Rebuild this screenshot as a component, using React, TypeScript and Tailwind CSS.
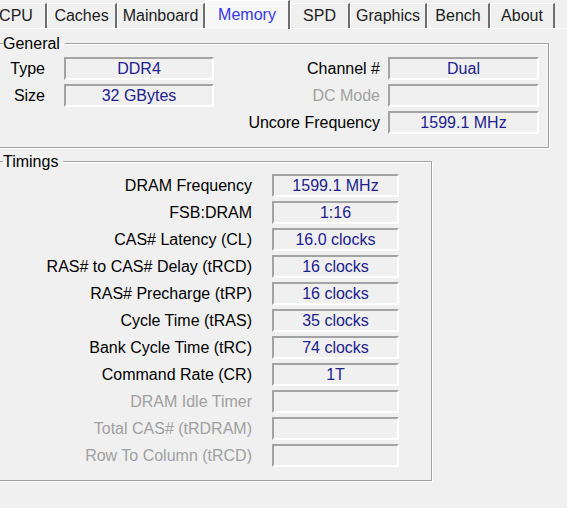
import React from 'react';

const tabs = [
  { name: 'CPU', w: 'w-[61px]' },
  { name: 'Caches', w: 'w-[70px]' },
  { name: 'Mainboard', w: 'w-[88px]' },
  { name: 'Memory', w: 'w-[85px]', active: true },
  { name: 'SPD', w: 'w-[60px]' },
  { name: 'Graphics', w: 'w-[77px]' },
  { name: 'Bench', w: 'w-[63px]' },
  { name: 'About', w: 'w-[65px]' },
];

const timings = [
  { label: 'DRAM Frequency', value: '1599.1 MHz' },
  { label: 'FSB:DRAM', value: '1:16' },
  { label: 'CAS# Latency (CL)', value: '16.0 clocks' },
  { label: 'RAS# to CAS# Delay (tRCD)', value: '16 clocks' },
  { label: 'RAS# Precharge (tRP)', value: '16 clocks' },
  { label: 'Cycle Time (tRAS)', value: '35 clocks' },
  { label: 'Bank Cycle Time (tRC)', value: '74 clocks' },
  { label: 'Command Rate (CR)', value: '1T' },
  { label: 'DRAM Idle Timer', value: '', disabled: true },
  { label: 'Total CAS# (tRDRAM)', value: '', disabled: true },
  { label: 'Row To Column (tRCD)', value: '', disabled: true },
];

// sunken readout box, like the win32 static fields
function Field({ value, className }: { value: string; className: string }) {
  return (
    <div
      className={`${className} h-full flex items-center justify-center bg-[#f0f0f0] border-2 border-t-[#a3a3a3] border-l-[#a3a3a3] border-b-white border-r-white text-[#20208f] whitespace-nowrap`}
    >
      {value}
    </div>
  );
}

export default function App() {
  return (
    <div className="w-[567px] h-[508px] overflow-hidden bg-[#f0f0f0] text-[16px] text-black font-['Liberation_Sans',Arial,sans-serif]">
      {/* tab strip */}
      <div className="flex items-end h-[29px] ml-[-14px] border-b border-white">
        {tabs.map((t) =>
          t.active ? (
            <div
              key={t.name}
              className={`${t.w} h-[29px] -mb-px relative bg-[#f7f7f7] border-t border-l border-white border-r-2 border-r-[#6e6e6e] flex items-center justify-center text-[#3636ee]`}
            >
              {t.name}
            </div>
          ) : (
            <div
              key={t.name}
              className={`${t.w} h-[25px] border-t border-l border-white border-r-2 border-r-[#6e6e6e] flex items-center justify-center text-[#1c1c1c]`}
            >
              {t.name}
            </div>
          )
        )}
      </div>

      {/* General */}
      <fieldset className="ml-[-2px] mt-[5px] w-[551px] border border-[#a0a0a0] shadow-[1px_1px_0_#fff,inset_1px_1px_0_#fff] px-px pt-[4px] pb-[13px]">
        <legend className="ml-[3px] pr-[5px] leading-[19px]">General</legend>
        <div className="flex flex-col gap-[4px]">
          <div className="flex items-center h-[23px]">
            <div className="w-[64px] pr-[19px] text-right">Type</div>
            <Field className="w-[150px]" value="DDR4" />
            <div className="w-[174px] pr-[8px] text-right">Channel #</div>
            <Field className="w-[151px]" value="Dual" />
          </div>
          <div className="flex items-center h-[23px]">
            <div className="w-[64px] pr-[19px] text-right">Size</div>
            <Field className="w-[150px]" value="32 GBytes" />
            <div className="w-[174px] pr-[8px] text-right text-[#a0a0a0]">DC Mode</div>
            <Field className="w-[151px]" value="" />
          </div>
          <div className="flex items-center h-[23px]">
            <div className="w-[214px]" />
            <div className="w-[174px] pr-[8px] text-right whitespace-nowrap">Uncore Frequency</div>
            <Field className="w-[151px]" value="1599.1 MHz" />
          </div>
        </div>
      </fieldset>

      {/* Timings */}
      <fieldset className="ml-[-2px] mt-[4px] w-[434px] border border-[#a0a0a0] shadow-[1px_1px_0_#fff,inset_1px_1px_0_#fff] px-px pt-[3px] pb-[13px]">
        <legend className="ml-[3px] pr-[5px] leading-[19px]">Timings</legend>
        <div className="flex flex-col gap-[4px]">
          {timings.map((r) => (
            <div key={r.label} className="flex items-center h-[23px]">
              <div className={`w-[272px] pr-[20px] text-right whitespace-nowrap ${r.disabled ? 'text-[#a0a0a0]' : ''}`}>
                {r.label}
              </div>
              <Field className="w-[127px]" value={r.value} />
            </div>
          ))}
        </div>
      </fieldset>
    </div>
  );
}
